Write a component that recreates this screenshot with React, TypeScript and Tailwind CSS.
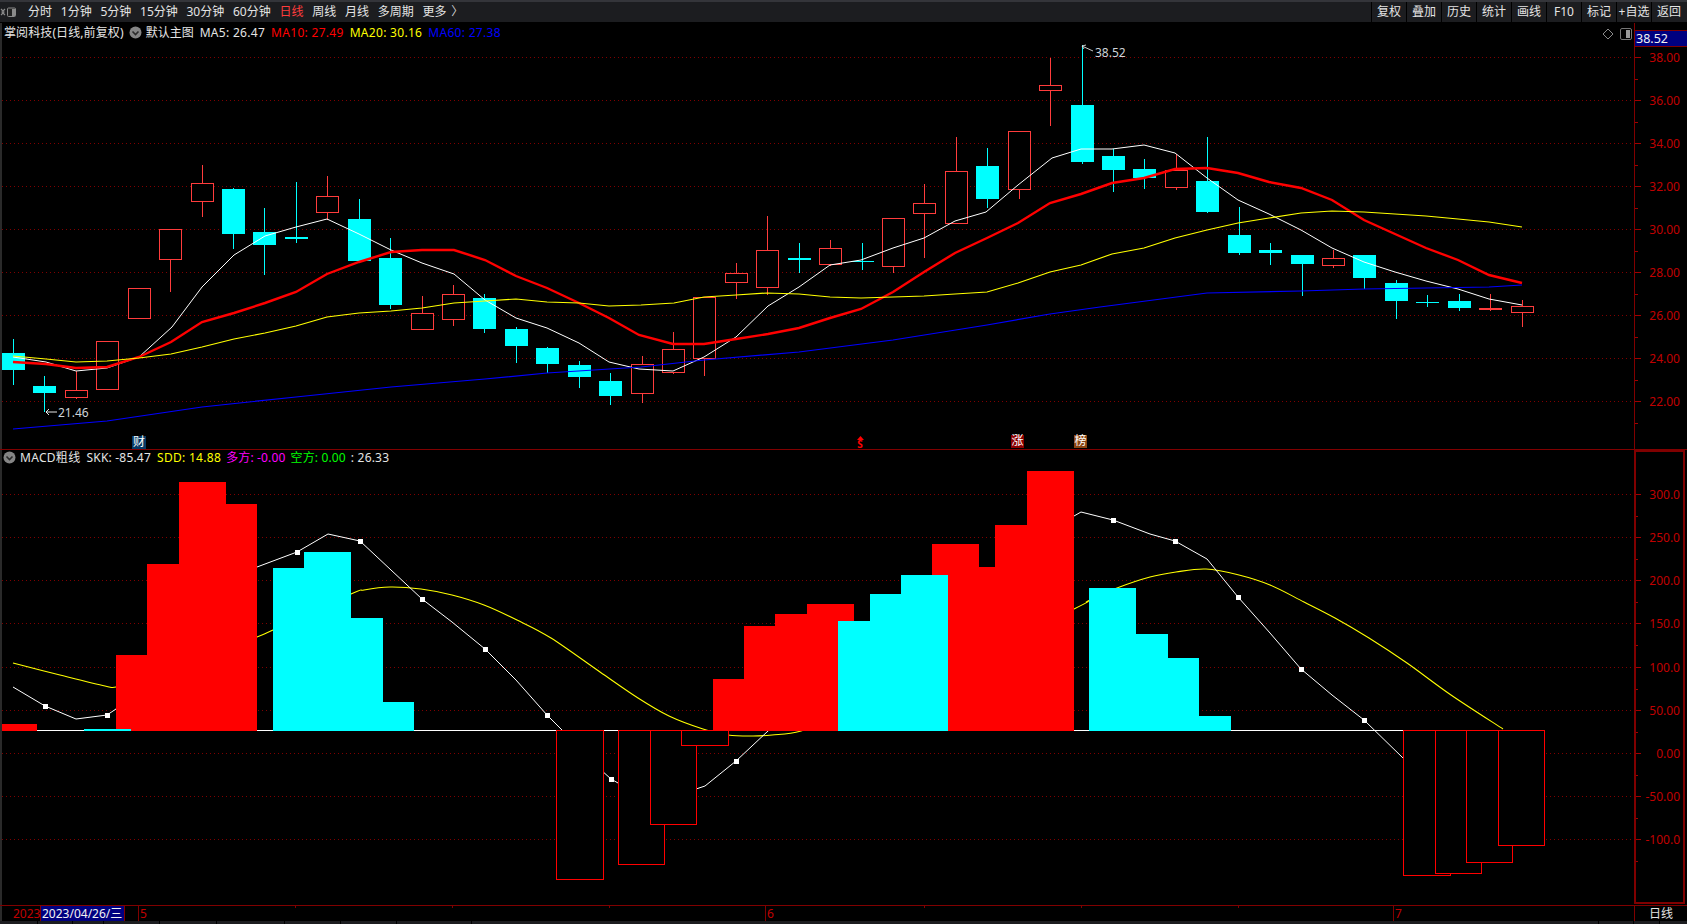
import React from "react";

// up, bodyTop, bodyBottom, high, low
type Candle = [boolean, number, number, number, number];
type Pt = [number, number];

const RED = "#ff3c3c";
const CYAN = "#00ffff";
const MAROON = "#800000";

const candles: Candle[] = [
  [false, 353, 370, 339, 385],
  [false, 386, 393, 376, 412],
  [true, 390, 397, 371, 399],
  [true, 341, 389, 341, 389],
  [true, 288, 318, 288, 318],
  [true, 229, 259, 229, 292],
  [true, 183, 201, 165, 217],
  [false, 189, 234, 188, 249],
  [false, 232, 245, 208, 275],
  [false, 237, 239, 182, 243],
  [true, 196, 212, 176, 220],
  [false, 219, 261, 199, 262],
  [false, 258, 305, 238, 309],
  [true, 313, 329, 296, 329],
  [true, 294, 319, 285, 326],
  [false, 298, 329, 294, 333],
  [false, 329, 346, 327, 363],
  [false, 348, 364, 347, 373],
  [false, 365, 377, 361, 388],
  [false, 381, 396, 373, 405],
  [true, 364, 393, 356, 403],
  [true, 349, 372, 332, 374],
  [true, 297, 358, 297, 376],
  [true, 273, 282, 263, 299],
  [true, 250, 287, 216, 295],
  [false, 258, 260, 243, 273],
  [true, 248, 264, 240, 266],
  [false, 261, 262, 243, 270],
  [true, 218, 266, 218, 273],
  [true, 203, 213, 184, 258],
  [true, 171, 223, 137, 223],
  [false, 166, 199, 148, 208],
  [true, 131, 189, 131, 199],
  [true, 85, 90, 58, 126],
  [false, 105, 162, 45, 164],
  [false, 156, 170, 149, 192],
  [false, 169, 178, 159, 189],
  [true, 170, 187, 154, 190],
  [false, 181, 212, 137, 213],
  [false, 235, 253, 207, 255],
  [false, 250, 253, 243, 265],
  [false, 255, 264, 255, 296],
  [true, 258, 265, 250, 268],
  [false, 255, 278, 255, 289],
  [false, 283, 301, 280, 319],
  [false, 302, 303, 295, 307],
  [false, 301, 308, 294, 311],
  [true, 308, 309, 294, 311],
  [true, 306, 312, 300, 327],
];

const ma5: Pt[] = [[13, 357], [46, 362], [76, 371], [107, 368], [139, 357], [172, 327], [202, 287], [234, 255], [265, 236], [296, 227], [327, 219], [359, 234], [391, 250], [422, 263], [454, 274], [485, 300], [516, 318], [547, 328], [579, 343], [609, 362], [639, 369], [673, 371], [704, 357], [736, 337], [768, 306], [799, 287], [830, 265], [861, 260], [893, 248], [924, 238], [955, 221], [986, 212], [1018, 185], [1052, 158], [1081, 149], [1112, 149], [1144, 145], [1175, 153], [1207, 178], [1238, 200], [1269, 214], [1301, 230], [1332, 248], [1364, 262], [1395, 272], [1426, 281], [1458, 289], [1489, 299], [1522, 305]];
const ma10: Pt[] = [[13, 362], [46, 364], [76, 368], [107, 367], [139, 357], [171, 342], [202, 322], [234, 313], [265, 303], [296, 292], [327, 274], [359, 262], [391, 252], [422, 250], [454, 250], [485, 260], [516, 276], [547, 288], [579, 303], [609, 318], [639, 335], [673, 344], [704, 344], [736, 339], [768, 334], [799, 328], [830, 318], [861, 309], [893, 292], [924, 272], [955, 253], [987, 238], [1018, 223], [1050, 203], [1081, 194], [1112, 183], [1144, 178], [1175, 169], [1207, 168], [1238, 173], [1269, 182], [1301, 188], [1332, 200], [1364, 220], [1395, 234], [1426, 248], [1458, 260], [1489, 275], [1522, 283]];
const ma20: Pt[] = [[13, 356], [46, 359], [76, 362], [107, 361], [139, 358], [171, 354], [202, 347], [234, 339], [265, 333], [296, 326], [327, 317], [359, 313], [391, 311], [422, 308], [454, 303], [485, 301], [516, 299], [547, 302], [579, 303], [609, 306], [641, 305], [674, 303], [704, 297], [736, 295], [767, 293], [799, 294], [830, 297], [861, 298], [893, 297], [924, 296], [955, 294], [987, 292], [1018, 283], [1050, 272], [1081, 265], [1112, 254], [1144, 248], [1175, 238], [1207, 230], [1238, 223], [1269, 218], [1301, 213], [1332, 211], [1364, 212], [1395, 214], [1426, 216], [1458, 219], [1489, 222], [1522, 227]];
const ma60: Pt[] = [[13, 429], [107, 421], [202, 407], [296, 397], [391, 387], [485, 379], [547, 373], [641, 367], [704, 360], [799, 352], [893, 340], [987, 325], [1050, 314], [1100, 307], [1207, 293], [1301, 291], [1364, 289], [1426, 288], [1489, 287], [1522, 285]];

const dif: Pt[] = [[13, 687], [45, 706], [76, 719], [107, 715], [116, 709], [170, 640], [205, 590], [257, 567], [297, 552], [328, 534], [360, 541], [391, 570], [422, 599], [452, 622], [485, 649], [516, 680], [547, 715], [562, 730], [590, 760], [611, 779], [618, 783], [650, 795], [696, 789], [705, 786], [736, 761], [768, 731], [830, 680], [861, 650], [893, 625], [924, 600], [956, 585], [987, 582], [1019, 550], [1050, 525], [1074, 516], [1081, 512], [1113, 520], [1150, 534], [1175, 541], [1207, 559], [1238, 597], [1270, 633], [1301, 669], [1332, 695], [1364, 720], [1403, 758]];
const dea: Pt[] = [[13, 663], [60, 675], [105, 686], [116, 687], [150, 681], [200, 660], [257, 637], [273, 630], [351, 594], [364, 590], [390, 587], [421, 589], [452, 595], [484, 605], [517, 620], [551, 638], [600, 672], [638, 698], [669, 716], [703, 729], [728, 735], [753, 736], [772, 735], [801, 731], [850, 712], [930, 680], [1074, 609], [1088, 601], [1117, 588], [1150, 577], [1176, 572], [1206, 569], [1239, 575], [1270, 585], [1304, 602], [1335, 618], [1369, 638], [1407, 663], [1451, 695], [1503, 729]];
const difDots: Pt[] = [[45, 706], [107, 715], [297, 552], [360, 541], [422, 599], [485, 649], [547, 715], [611, 779], [736, 761], [1113, 520], [1175, 541], [1238, 597], [1301, 669], [1364, 720]];

// left, right, top
const redBars = [[2, 37, 724], [116, 163, 655], [147, 194, 564], [179, 226, 482], [210, 257, 504], [713, 760, 679], [744, 791, 626], [775, 822, 614], [807, 854, 604], [932, 979, 544], [948, 1011, 567], [995, 1042, 525], [1027, 1074, 471]];
const cyanBars = [[84, 131, 729], [273, 320, 568], [304, 351, 552], [336, 383, 618], [367, 414, 702], [838, 885, 621], [870, 917, 594], [901, 948, 575], [1089, 1136, 588], [1121, 1168, 634], [1152, 1199, 658], [1184, 1231, 716]];
// left, right, bottom
const negBars = [[556, 603, 879], [618, 664, 864], [650, 696, 824], [681, 728, 745], [1403, 1450, 875], [1435, 1481, 873], [1466, 1512, 862], [1498, 1544, 845]];

const priceTicks: [string, number][] = [["38.00", 57], ["36.00", 100], ["34.00", 143], ["32.00", 186], ["30.00", 229], ["28.00", 272], ["26.00", 315], ["24.00", 358], ["22.00", 401]];
const macdTicks: [string, number][] = [["300.0", 494], ["250.0", 537], ["200.0", 580], ["150.0", 623], ["100.0", 667], ["50.00", 710], ["0.00", 753], ["-50.00", 796], ["-100.0", 839]];

const periods = ["分时", "1分钟", "5分钟", "15分钟", "30分钟", "60分钟", "日线", "周线", "月线", "多周期", "更多"];
const tools = ["复权", "叠加", "历史", "统计", "画线", "F10", "标记", "+自选", "返回"];
const footTabs = [38, 35, 31, 56, 57, 68, 56, 56, 75];

const pts = (list: Pt[]) => list.map((p) => p.join(",")).join(" ");

// catmull-rom through the points, the signal line has no corners
function smooth(list: Pt[]) {
  let d = `M${list[0][0]} ${list[0][1]}`;
  for (let i = 0; i < list.length - 1; i++) {
    const a = list[Math.max(i - 1, 0)];
    const b = list[i];
    const c = list[i + 1];
    const e = list[Math.min(i + 2, list.length - 1)];
    d += ` C${b[0] + (c[0] - a[0]) / 6} ${b[1] + (c[1] - a[1]) / 6} ${c[0] - (e[0] - b[0]) / 6} ${c[1] - (e[1] - b[1]) / 6} ${c[0]} ${c[1]}`;
  }
  return d;
}

function Chevron() {
  return (
    <svg width="13" height="13" viewBox="0 0 13 13" className="shrink-0">
      <circle cx="6.5" cy="6.5" r="6" fill="#858585" />
      <path d="M3.5 5.5 L6.5 8.5 L9.5 5.5" fill="none" stroke="#2a2a2a" strokeWidth="1.6" />
    </svg>
  );
}

function Grid({ ys }: { ys: number[] }) {
  return (
    <g shapeRendering="crispEdges">
      {ys.map((y) => (
        <line key={y} x1="2" x2="1634" y1={y + 0.5} y2={y + 0.5} stroke={MAROON} strokeDasharray="1 3" />
      ))}
    </g>
  );
}

function Axis({ ticks, top, height }: { ticks: [string, number][]; top: number; height: number }) {
  return (
    <svg width="53" height={height} viewBox={`1634 ${top} 53 ${height}`} className="block">
      {ticks.map(([label, y]) => (
        <g key={label}>
          <line x1="1635" x2="1641" y1={y + 0.5} y2={y + 0.5} stroke="#a00000" shapeRendering="crispEdges" />
          <line x1="1635" x2="1638" y1={y + 22} y2={y + 22} stroke="#a00000" shapeRendering="crispEdges" />
          <text x="1680" y={y + 5} textAnchor="end" fontSize="12" fill="#c00000">{label}</text>
        </g>
      ))}
    </svg>
  );
}

function PriceChart() {
  return (
    <svg width="1634" height="426" viewBox="0 23 1634 426" className="block">
      <Grid ys={priceTicks.map((t) => t[1])} />
      {candles.map(([up, top, bottom, high, low], i) => {
        const x = Math.round(13 + 31.43 * i);
        const color = up ? RED : CYAN;
        return (
          <g key={i} shapeRendering="crispEdges">
            <line x1={x + 0.5} x2={x + 0.5} y1={high} y2={low} stroke={color} />
            {up ? (
              <rect x={x - 11 + 0.5} y={top + 0.5} width="22" height={bottom - top} fill="#000" stroke={color} />
            ) : (
              <rect x={x - 11} y={top} width="23" height={bottom - top} fill={color} />
            )}
          </g>
        );
      })}
      <polyline points={pts(ma5)} fill="none" stroke="#fff" strokeWidth="1" />
      <polyline points={pts(ma10)} fill="none" stroke="#ff0000" strokeWidth="2.4" />
      <polyline points={pts(ma20)} fill="none" stroke="#ffff00" strokeWidth="1.2" />
      <polyline points={pts(ma60)} fill="none" stroke="#0000ff" strokeWidth="1.2" />
      <path d="M46 412 H57 M46 412 L49 409 M46 412 L49 415" fill="none" stroke="#fff" strokeWidth="0.9" />
      <text x="58" y="417" fontSize="12" fill="#cfd4da">21.46</text>
      <path d="M1082 46 L1093 51 M1082 46 L1086 45 M1082 46 L1084 49" fill="none" stroke="#ddd" strokeWidth="0.9" />
      <text x="1095" y="57" fontSize="12" fill="#cfd4da">38.52</text>
    </svg>
  );
}

function MacdChart() {
  return (
    <svg width="1634" height="455" viewBox="0 450 1634 455" className="block">
      <Grid ys={macdTicks.map((t) => t[1])} />
      <line x1="37" x2="1403" y1="730.5" y2="730.5" stroke="#fff" shapeRendering="crispEdges" />
      <path d={smooth(dea)} fill="none" stroke="#ffff00" strokeWidth="1.1" />
      <polyline points={pts(dif)} fill="none" stroke="#fff" strokeWidth="1" />
      {difDots.map(([x, y]) => (
        <rect key={x} x={x - 2} y={y - 2} width="5" height="5" fill="#fff" shapeRendering="crispEdges" />
      ))}
      <g shapeRendering="crispEdges">
        {redBars.map(([l, r, t]) => (
          <rect key={l} x={l} y={t} width={r - l} height={731 - t} fill="#ff0000" />
        ))}
        {cyanBars.map(([l, r, t]) => (
          <rect key={l} x={l} y={t} width={r - l} height={731 - t} fill={CYAN} />
        ))}
        {negBars.map(([l, r, b]) => (
          <rect key={l} x={l + 0.5} y={730.5} width={r - l} height={b - 730} fill="#000" stroke="#ff0000" />
        ))}
      </g>
    </svg>
  );
}

export default function App() {
  return (
    <div className="w-[1687px] h-[924px] bg-black flex flex-col overflow-hidden text-[12px] leading-none text-[#e4e4e4] font-['Noto_Sans','Noto_Sans_CJK_SC',sans-serif]">
      {/* top toolbar */}
      <div className="h-[23px] shrink-0 flex items-stretch bg-[#1c1d20] border-t-2 border-t-[#34353a] border-b border-b-black">
        <svg width="17" height="20" viewBox="0 0 17 20" className="shrink-0">
          <path d="M1 7 L4 10 L1 13 M5 7 L2 10 L5 13" fill="none" stroke="#8a8a8a" strokeWidth="1.2" />
          <rect x="7.5" y="6" width="8" height="8.5" rx="1" fill="#222" stroke="#8a8a8a" />
          <rect x="12" y="7" width="3" height="7" fill="#8a8a8a" />
        </svg>
        <div className="flex items-center gap-[8.75px] ml-[11px]">
          {periods.map((p) => (
            <span key={p} className={p === "日线" ? "text-[#ff3c3c]" : ""}>{p}</span>
          ))}
          <span className="ml-[-4px] text-[#d0d0d0]">〉</span>
        </div>
        <div className="ml-auto mr-px flex">
          {tools.map((t) => (
            <div key={t} className="w-[35px] border-l border-black flex items-center justify-center whitespace-nowrap">{t}</div>
          ))}
        </div>
      </div>

      {/* price pane */}
      <div className="h-[427px] shrink-0 flex border-b border-[#800000]">
        <div className="relative w-[1634px] border-l-2 border-l-[#2a2a2a]">
          <div className="-ml-[2px]">
            <PriceChart />
          </div>
          <div className="absolute left-[2px] top-[3px] flex items-center h-[13px] whitespace-nowrap">
            <span className="tracking-[0.1px]">掌阅科技(日线,前复权)</span>
            <span className="ml-[5px]"><Chevron /></span>
            <span className="ml-[4px]">默认主图</span>
            <span className="ml-[6px] tracking-[0.3px]">MA5: 26.47</span>
            <span className="ml-[6px] tracking-[0.3px] text-[#ff0000]">MA10: 27.49</span>
            <span className="ml-[6px] tracking-[0.3px] text-[#ffff00]">MA20: 30.16</span>
            <span className="ml-[6px] tracking-[0.3px] text-[#0000ff]">MA60: 27.38</span>
          </div>
          <svg width="12" height="12" viewBox="0 0 12 12" className="absolute left-[1600px] top-[5px]">
            <path d="M6 1 L11 6 L6 11 L1 6 Z" fill="none" stroke="#8a8a8a" />
          </svg>
          <svg width="12" height="12" viewBox="0 0 12 12" className="absolute left-[1618px] top-[5px]">
            <rect x="0.5" y="0.5" width="11" height="11" rx="1.5" fill="none" stroke="#777" />
            <rect x="6" y="2" width="4" height="8" fill="#999" />
          </svg>
          <span className="absolute left-[130px] top-[413px] w-[14px] h-[13px] bg-[#063a66] text-white text-center">财</span>
          <svg width="7" height="4" viewBox="0 0 7 4" className="absolute left-[855px] top-[413px]">
            <path d="M3.5 0 L7 4 H0 Z" fill="#ff0000" />
          </svg>
          <span className="absolute left-[853px] top-[416px] w-[10px] text-center text-[#ff0000] text-[10px] font-bold">S</span>
          <span className="absolute left-[1009px] top-[412px] w-[13px] h-[13px] bg-[#8b0000] text-white text-center">涨</span>
          <span className="absolute left-[1072px] top-[412px] w-[13px] h-[13px] bg-[#8b4513] text-white text-center">榜</span>
        </div>
        <div className="relative flex-1 border-l border-[#800000]">
          <div className="-ml-px">
            <Axis ticks={priceTicks} top={23} height={426} />
          </div>
          <div className="absolute left-0 top-[7px] w-full h-[17px] bg-[#000080] border-y border-[#800000] pl-px text-[#f2f2f2] text-[12.5px] leading-[15px]">38.52</div>
        </div>
      </div>

      {/* MACD pane */}
      <div className="h-[455px] shrink-0 flex">
        <div className="relative w-[1634px] border-l-2 border-l-[#2a2a2a]">
          <div className="-ml-[2px]">
            <MacdChart />
          </div>
          <div className="absolute left-[1px] top-[1px] flex items-center h-[13px] whitespace-nowrap">
            <Chevron />
            <span className="ml-[4px] tracking-[0.3px]">MACD粗线</span>
            <span className="ml-[6px] tracking-[0.2px]">SKK: -85.47</span>
            <span className="ml-[6px] tracking-[0.3px] text-[#ffff00]">SDD: 14.88</span>
            <span className="ml-[5px] tracking-[0.15px] text-[#ff00ff]">多方: -0.00</span>
            <span className="ml-[5px] tracking-[0.15px] text-[#00ff00]">空方: 0.00</span>
            <span className="ml-[5px] tracking-[0.2px]">: 26.33</span>
          </div>
        </div>
        <div className="flex-1 pr-[2px]">
          <div className="w-[51px] h-[454px] border-2 border-[#800000] overflow-hidden">
            <div className="-mt-[2px] -ml-[2px]">
              <Axis ticks={macdTicks} top={450} height={454} />
            </div>
          </div>
        </div>
      </div>

      {/* date strip */}
      <div className="h-[16px] shrink-0 flex border-t border-[#800000] text-[#c00000]">
        <div className="relative w-[1634px] border-l-2 border-l-[#2a2a2a]">
          <span className="absolute left-[11px] top-[2px]">2023</span>
          <span className="absolute left-[38px] top-0 h-[15px] w-[85px] bg-[#000080] border-x border-[#800000] pl-px text-[#f2f2f2] leading-[15px] whitespace-nowrap overflow-hidden">2023/04/26/三</span>
          <span className="absolute left-[136px] top-0 h-[15px] border-l border-[#800000] pl-px leading-[15px]">5</span>
          <span className="absolute left-[763px] top-0 h-[15px] border-l border-[#800000] pl-px leading-[15px]">6</span>
          <span className="absolute left-[1391px] top-0 h-[15px] border-l border-[#800000] pl-px leading-[15px]">7</span>
          {[293, 450, 607, 922, 1079, 1236].map((x) => (
            <span key={x} className="absolute top-0 h-[2px] border-l border-[#800000]" style={{ left: x }} />
          ))}
        </div>
        <div className="flex-1 border-l border-[#800000] text-center text-[#e4e4e4] leading-[15px]">日线</div>
      </div>

      {/* cut off tab row */}
      <div className="flex-1 flex bg-[#1c1d20]">
        {footTabs.map((w, i) => (
          <div key={i} className="border-r border-black" style={{ width: w }} />
        ))}
        <div className="flex-1 border-r border-black" />
        <div className="w-[35px] border-r border-black" />
        <div className="w-[26px] border-r border-black" />
        <div className="flex-1 max-w-[27px]" />
      </div>
    </div>
  );
}
